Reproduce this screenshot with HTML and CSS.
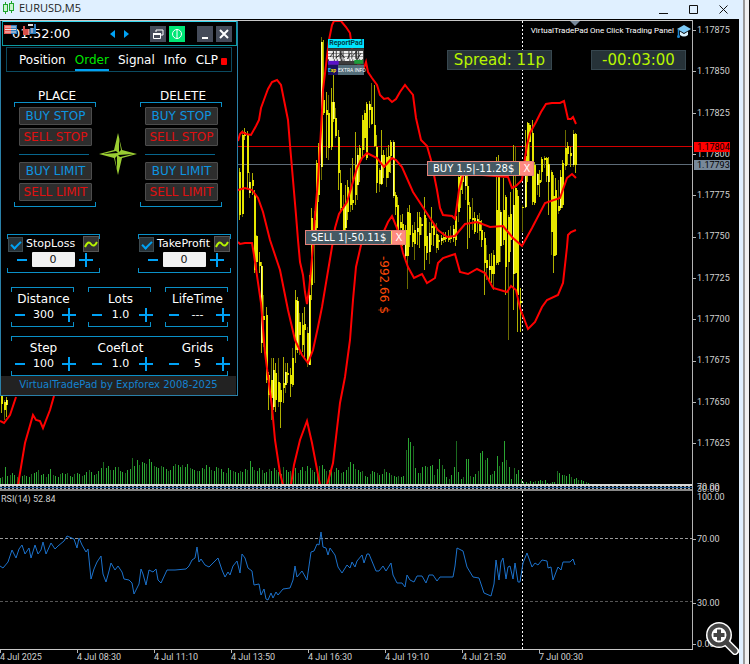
FILE: index.html
```html
<!DOCTYPE html>
<html lang="en">
<head>
  <meta charset="UTF-8" />
  <meta name="viewport" content="width=device-width, initial-scale=1" />
  <title>EURUSD,M5</title>
  <link rel="stylesheet" href="styles.css">
</head>
<body>
  <div class="window">
    <header class="titlebar">
      <svg class="candle-icon" viewBox="0 0 11 14"><path d="M2.5 1v12M8.5 0v12" stroke="#1fa52e"/><rect x=".5" y="3.500" width="4" height="7" fill="#c9f5cf" stroke="#1fa52e"/><rect x="6.500" y="2.500" width="4" height="7" fill="#c9f5cf" stroke="#1fa52e"/></svg>
      <h1>EURUSD,M5</h1>
      <div class="window-buttons">
        <button aria-label="Minimize"><svg viewBox="0 0 9 9"><path d="M0 8.500h9"/></svg></button>
        <button aria-label="Maximize"><svg viewBox="0 0 9 9"><path d="M.5.5h8v8h-8z"/></svg></button>
        <button aria-label="Close"><svg viewBox="0 0 9 9"><path d="M.5.5l8 8M8.500.5l-8 8"/></svg></button>
      </div>
    </header>

    <main class="chart">
      <section class="pane price-pane">
        <div class="plot">
          <svg id="price" viewBox="0 21 692 463" preserveAspectRatio="none"></svg>

          <div class="one-click">
            <span>VirtualTradePad One Click Trading Panel</span>
            <svg viewBox="0 0 14 13"><path d="M0 4l7-4 7 4-7 4z" fill="#7cc8f5"/><path d="M3 6.500v3.500q4 3 8 0V6.500L7 9z" fill="#d7effc"/><path d="M1.500 4.500V11" stroke="#1d86cf" stroke-width="1.500"/><circle cx="1.500" cy="11.500" r="1.500" fill="#1d86cf"/></svg>
          </div>
          <div class="badge spread">Spread: 11p</div>
          <div class="badge timer">-00:03:00</div>
          <div class="deal buy"><span>BUY 1.5|-11.28$</span><button aria-label="Close buy">X</button></div>
          <div class="deal sell"><span>SELL 1|-50.11$</span><button aria-label="Close sell">X</button></div>
          <div class="loss">-992.66 $</div>

          <div class="report">
            <b>ReportPad</b>
            <svg viewBox="0 0 37 17">
              <rect width="37" height="17" fill="#3c3c3c"/>
              <path d="M0 4h36M0 7h36M0 10h36M1 12h34" stroke="#eee" stroke-width="2.500" stroke-dasharray="5 1 2 1 3 2 1 1"/>
              <path d="M2 9l4-5M8 10l5-4M13 5l4 5M20 11l3-6M25 8l5-5M30 11l4-6" stroke="#222"/>
              <rect y="13" width="11" height="4" fill="#5b12c9"/><rect x="27" y="12" width="9" height="4" fill="#1d9b3a"/>
            </svg>
            <div><em>E<i>xp</i></em><span>EXTRA INFO</span></div>
          </div>

          <aside class="panel">
            <div class="panel-head">
              <time>01:52:00</time>
              <svg class="flags" viewBox="0 0 34 12">
                <path d="M0 1h7v9H0z" fill="#e9574f"/><path d="M7 1h6v9H7z" fill="#2d7fc0"/><path d="M1 3h11M1 5.500h11M1 8h11" stroke="#f5dcdc"/>
                <path d="M19 2h2v3h4v6h-6z" fill="#d85049"/><path d="M32 0h-2v4h-4v6h6z" fill="#2d7fc0"/><path d="M24 1h5" stroke="#ddd" stroke-width="2"/><path d="M25 5v6M28 4v5" stroke="#f3c8c8"/>
              </svg>
              <button class="arrow" aria-label="Previous"><svg viewBox="0 0 5 8"><path d="M5 0v8L0 4z"/></svg></button>
              <button class="arrow" aria-label="Next"><svg viewBox="0 0 5 8"><path d="M0 0v8l5-4z"/></svg></button>
              <div class="head-buttons">
                <button aria-label="Restore"><svg viewBox="0 0 16 16"><path d="M6 6V4h7v5h-2M3.500 7.500h7v5h-7z" /><path d="M3 8h8" stroke-width="2"/></svg></button>
                <button class="info" aria-label="About"><svg viewBox="0 0 16 16"><circle cx="8" cy="8" r="4.500"/><path d="M8 3v10"/></svg></button>
                <button class="min" aria-label="Minimize panel"><svg viewBox="0 0 16 16"><path d="M5 12h6" stroke-width="2"/></svg></button>
                <button aria-label="Close panel"><svg viewBox="0 0 16 16"><path d="M4 4l8 8M12 4l-8 8" stroke-width="2"/></svg></button>
              </div>
            </div>

            <nav class="tabs">
              <button>Position</button>
              <button class="active">Order</button>
              <button>Signal</button>
              <button>Info</button>
              <button>CLP</button>
              <i class="dot"></i>
            </nav>

            <div class="orders">
              <section>
                <h2>PLACE</h2>
                <div class="bracket order-box">
                  <button class="up">BUY STOP</button>
                  <button class="down">SELL STOP</button>
                  <hr>
                  <button class="up">BUY LIMIT</button>
                  <button class="down">SELL LIMIT</button>
                </div>
              </section>
              <svg class="star" viewBox="0 0 38 42">
                <path d="M19 0l4 17 15 4-15 4-4 17-4-17-15-4 15-4z" fill="#9acd32"/>
                <path d="M20 5l2 12-2 2zM34 21l-13 3-2-2zM18 37l-2-12 2-2zM4 21l13-3 2 2z" fill="#000"/>
              </svg>
              <section>
                <h2>DELETE</h2>
                <div class="bracket order-box">
                  <button class="up">BUY STOP</button>
                  <button class="down">SELL STOP</button>
                  <hr>
                  <button class="up">BUY LIMIT</button>
                  <button class="down">SELL LIMIT</button>
                </div>
              </section>
            </div>

            <div class="stops">
              <div class="bracket stop">
                <div class="stop-head">
                  <input type="checkbox" id="sl-on" checked>
                  <label for="sl-on">StopLoss</label>
                  <button aria-label="StopLoss line"><svg viewBox="0 0 14 14"><path d="M1 10Q4 3 7 7t6-2"/></svg></button>
                </div>
                <div class="stepper">
                  <button class="minus" aria-label="Less StopLoss"></button>
                  <input type="text" value="0" aria-label="StopLoss value">
                  <button class="plus" aria-label="More StopLoss"></button>
                </div>
              </div>
              <div class="bracket stop">
                <div class="stop-head">
                  <input type="checkbox" id="tp-on" checked>
                  <label for="tp-on">TakeProfit</label>
                  <button aria-label="TakeProfit line"><svg viewBox="0 0 14 14"><path d="M1 10Q4 3 7 7t6-2"/></svg></button>
                </div>
                <div class="stepper">
                  <button class="minus" aria-label="Less TakeProfit"></button>
                  <input type="text" value="0" aria-label="TakeProfit value">
                  <button class="plus" aria-label="More TakeProfit"></button>
                </div>
              </div>
            </div>

            <div class="params">
              <div class="bracket param">
                <label for="distance">Distance</label>
                <div class="stepper"><button class="minus" aria-label="Less distance"></button><input type="text" id="distance" value="300"><button class="plus" aria-label="More distance"></button></div>
              </div>
              <div class="bracket param">
                <label for="lots">Lots</label>
                <div class="stepper"><button class="minus" aria-label="Less lots"></button><input type="text" id="lots" value="1.0"><button class="plus" aria-label="More lots"></button></div>
              </div>
              <div class="bracket param">
                <label for="lifetime">LifeTime</label>
                <div class="stepper"><button class="minus" aria-label="Less lifetime"></button><input type="text" id="lifetime" value="---"><button class="plus" aria-label="More lifetime"></button></div>
              </div>
            </div>

            <div class="params bracket">
              <div class="param">
                <label for="step">Step</label>
                <div class="stepper"><button class="minus" aria-label="Less step"></button><input type="text" id="step" value="100"><button class="plus" aria-label="More step"></button></div>
              </div>
              <div class="param">
                <label for="coef">CoefLot</label>
                <div class="stepper"><button class="minus" aria-label="Less coef"></button><input type="text" id="coef" value="1.0"><button class="plus" aria-label="More coef"></button></div>
              </div>
              <div class="param">
                <label for="grids">Grids</label>
                <div class="stepper"><button class="minus" aria-label="Less grids"></button><input type="text" id="grids" value="5"><button class="plus" aria-label="More grids"></button></div>
              </div>
            </div>

            <footer><a href="#">VirtualTradePad by Expforex 2008-2025</a></footer>
          </aside>
        </div>

        <div class="axis">
          <ul class="prices">
            <li>1.17875</li><li>1.17850</li><li>1.17825</li><li>1.17800</li><li>1.17775</li><li>1.17750</li>
            <li>1.17725</li><li>1.17700</li><li>1.17675</li><li>1.17650</li><li>1.17625</li>
          </ul>
          <span class="tag ask">1.17804</span>
          <span class="tag bid">1.17793</span>
        </div>
      </section>

      <div class="pane splitter">
        <div class="plot"></div>
        <div class="axis"><span class="squeezed">70.00</span><span class="squeezed low">30.00</span></div>
      </div>

      <section class="pane rsi-pane">
        <div class="plot">
          <svg id="rsi" viewBox="0 491 692 158" preserveAspectRatio="none"></svg>
          <span class="rsi-name">RSI(14) 52.84</span>
        </div>
        <ul class="axis rsi-levels">
          <li class="plain">100.00</li><li>70.00</li><li>30.00</li><li>0.00</li>
        </ul>
      </section>

      <ul class="times">
        <li>4 Jul 2025</li><li>4 Jul 08:30</li><li>4 Jul 11:10</li><li>4 Jul 13:50</li><li>4 Jul 16:30</li>
        <li>4 Jul 19:10</li><li>4 Jul 21:50</li><li>7 Jul 00:30</li>
      </ul>

      <button class="magnify" aria-label="Zoom in">
        <svg viewBox="0 0 34 34"><path d="M22 22l8 8" stroke="#fff" stroke-width="8" stroke-linecap="round"/><circle cx="14" cy="14" r="13" fill="#fff"/><path d="M22 22l8 8" stroke="#444" stroke-width="5" stroke-linecap="round"/><circle cx="14" cy="14" r="9.500" fill="#fff" stroke="#444" stroke-width="4"/><path d="M14 8.500v11M8.500 14h11" stroke="#444" stroke-width="4"/></svg>
      </button>
    </main>
  </div>
  <div class="edge"></div>

  <script src="chart.js"></script>
</body>
</html>
```

FILE: styles.css
```css
:root {
  --frame: #e0f0ff;
  --line: #0a90c8;
  --blue: #00a2f5;
  --wide: "DejaVu Sans", Verdana, sans-serif;
  --small: Roboto, "Liberation Sans", sans-serif;
}
* {
  box-sizing: border-box;
}
body {
  margin: 0;
  display: flex;
  min-height: 100vh;
  background: #000;
  color: #fff;
  font-family: var(--wide);
  font-size: 12px;
}
button {
  margin: 0;
  padding: 0;
  border: none;
  background: none;
  color: inherit;
  font: inherit;
  cursor: pointer;
}
button svg {
  display: block;
  fill: none;
}
ul {
  margin: 0;
  padding: 0;
  list-style: none;
}
.window {
  flex: 1;
  min-width: 0;
  display: flex;
  flex-direction: column;
  background: var(--frame);
}
.edge {
  width: 7px;
  background: #f0f0f0;
  border-left: 2px solid #999;
  border-right: 1px solid #111;
}

/* title bar */
.titlebar {
  height: 19px;
  display: flex;
  align-items: center;
  padding: 0 15px 4px 3px;
  color: #222;
}
.candle-icon {
  width: 11px;
  height: 14px;
  margin-right: 5px;
}
.titlebar h1 {
  margin: 0;
  font: 11px "Open Sans", sans-serif;
}
.window-buttons {
  margin-left: auto;
  padding-top: 4px;
  display: flex;
  gap: 21px;
}
.window-buttons svg {
  width: 9px;
  height: 9px;
  stroke: #111;
}

/* chart */
.chart {
  position: relative;
  flex: 1;
  display: flex;
  flex-direction: column;
  margin-right: 4px;
  padding-top: 1px;
  background: #000;
}
.pane {
  display: flex;
}
.plot {
  position: relative;
  flex: 1;
  min-width: 0;
}
.plot > svg {
  position: absolute;
  width: 100%;
  height: 100%;
}
.axis {
  position: relative;
  width: 47px;
  border-left: 1px solid #b4b4b4;
  font: 9px/12px var(--small);
  color: #d0d0d0;
}
.axis li::before {
  content: "";
  display: inline-block;
  width: 3px;
  height: 1px;
  margin-right: 1px;
  background: #b4b4b4;
  vertical-align: middle;
}
.axis li.plain::before {
  background: none;
}
.price-pane {
  flex: 1;
  min-height: 464px;
}
.price-pane > .plot {
  border-top: 1px solid #c8c8c8;
}
.prices {
  height: 100%;
  padding: 4px 0 35px;
  display: flex;
  flex-direction: column;
  justify-content: space-between;
}
.tag {
  position: absolute;
  left: 1px;
  width: 36px;
  height: 10px;
  padding-left: 3px;
  line-height: 10px;
  color: #000;
}
.ask {
  top: 122px;
  background: #f00;
}
.bid {
  top: 140px;
  background: #778899;
}
.splitter {
  height: 7px;
}
.splitter .plot {
  border-top: 2px solid #d8d8d8;
  border-bottom: 2px solid #888;
  background:
    linear-gradient(#16508c, #16508c) 0 1px / 100% 1px no-repeat,
    repeating-linear-gradient(90deg, #aaa 0 2px, #000 2px 4px);
}
.squeezed {
  position: absolute;
  left: 4px;
  top: -3px;
}
.squeezed.low {
  top: -1px;
}
.rsi-pane {
  height: 158px;
}
.rsi-name {
  position: absolute;
  left: 1px;
  top: 2px;
  font: 9px/12px var(--small);
  color: #d0d0d0;
}
.rsi-levels {
  display: grid;
  grid-template-rows: 42px 64px 41px 11px;
}
.times {
  height: 15px;
  margin-right: 46px;
  display: grid;
  grid-template-columns: repeat(9, 1fr);
  border-top: 1px solid #c8c8c8;
  font: 9px/14px var(--small);
  color: #d0d0d0;
}
.times li {
  background: linear-gradient(#b4b4b4, #b4b4b4) 0 0 / 1px 3px no-repeat;
}
.magnify {
  position: absolute;
  right: 0;
  bottom: 9px;
}
.magnify svg {
  width: 34px;
  height: 34px;
}

/* things lying over the chart */
.one-click {
  position: absolute;
  right: 1px;
  top: 3px;
  display: flex;
  align-items: center;
  gap: 3px;
  font: 8px/14px var(--small);
}
.one-click svg {
  width: 14px;
  height: 13px;
}
.badge {
  position: absolute;
  top: 29px;
  height: 20px;
  line-height: 19px;
  text-align: center;
  font-size: 15px;
  color: #b8f500;
  background: #263238;
  border: 1px solid #37474f;
}
.spread {
  left: 447px;
  width: 105px;
}
.timer {
  left: 591px;
  width: 95px;
}
.deal {
  position: absolute;
  display: flex;
  height: 15px;
  font-size: 10px;
  line-height: 13px;
  border: 1px solid #e58078;
  background: #455a64;
}
.deal span {
  padding: 0 5px;
}
.deal button {
  width: 14px;
  background: #ff8a80;
  border-left: 1px solid #ffe060;
}
.buy {
  left: 427px;
  top: 140px;
}
.sell {
  left: 305px;
  top: 209px;
}
.loss {
  position: absolute;
  left: 377px;
  top: 235px;
  writing-mode: vertical-rl;
  line-height: 14px;
  color: #ff4a08;
}
.report {
  position: absolute;
  left: 328px;
  top: 18px;
  width: 36px;
  display: flex;
  flex-direction: column;
}
.report b {
  background: #00e5ff;
  color: #003a44;
  font: bold 7px/9px var(--small);
  text-align: center;
}
.report > svg {
  width: 100%;
  height: 17px;
}
.report div {
  display: flex;
  height: 10px;
  font: 5px/10px var(--small);
  white-space: nowrap;
  background: #546e7a;
}
.report em {
  flex: none;
  width: 10px;
  background: #1a1060;
  color: #20d0ff;
  font: bold 5px/10px var(--small);
}
.report em i {
  color: #ffe000;
  font-style: normal;
}

/* trade panel */
.panel {
  position: absolute;
  left: 0;
  top: 0;
  width: 238px;
  background: #000;
  border: 1px solid #2a80a8;
  border-top: none;
}
.panel-head {
  position: relative;
  height: 25px;
  margin-left: 1px;
  padding: 0 4px 0 9px;
  display: flex;
  align-items: center;
  border: 1px solid #0b9aa0;
  border-top-color: #35d8f0;
}
.flags {
  position: absolute;
  left: 1px;
  top: 2px;
  width: 34px;
  height: 12px;
}
.panel-head time {
  font-size: 13px;
  margin-right: 40px;
}
.arrow {
  margin-right: 9px;
}
.arrow svg {
  width: 5px;
  height: 8px;
  fill: var(--blue);
}
.head-buttons {
  margin-left: auto;
  display: flex;
  gap: 3px;
}
.head-buttons button {
  background: #454b59;
}
.head-buttons .info {
  background: #00e676;
}
.head-buttons .min {
  margin-left: 9px;
}
.head-buttons svg {
  width: 16px;
  height: 16px;
  stroke: #fff;
}
.tabs {
  height: 25px;
  margin: 1px 5px 0;
  padding: 3px 4px 0 12px;
  display: flex;
  justify-content: space-between;
  border: 1px solid #0b4a60;
}
.tabs button {
  height: 20px;
  border-bottom: 2px solid transparent;
}
.tabs .active {
  color: #00e600;
  border-bottom-color: var(--blue);
}
.dot {
  width: 6px;
  height: 7px;
  margin: 7px 0 0 -6px;
  border-radius: 1px;
  background: #f00;
}
.orders {
  display: flex;
  align-items: center;
  justify-content: space-between;
  margin: 18px 15px 0 13px;
}
.orders h2 {
  margin: 0;
  padding-left: 4px;
  font: 12px/12px var(--wide);
  text-align: center;
}
.star {
  width: 38px;
  height: 42px;
  margin-top: 10px;
}
.bracket {
  position: relative;
}
.bracket::before, .bracket::after {
  content: "";
  position: absolute;
  left: 0;
  right: 0;
  height: 4px;
  border: 1px solid var(--line);
  pointer-events: none;
}
.bracket::before {
  top: 0;
  border-bottom: none;
}
.bracket::after {
  bottom: 0;
  border-top: none;
}
.order-box {
  width: 82px;
  height: 105px;
  padding: 5px 4px 6px 5px;
  display: flex;
  flex-direction: column;
  justify-content: space-between;
}
.order-box button {
  height: 18px;
  line-height: 16px;
  white-space: nowrap;
  background: #2d2d2d;
  border: 1px solid #4c4c4c;
  border-radius: 1px;
}
.order-box hr {
  width: 70px;
  margin: 4px 0;
  border: none;
  border-top: 1px solid #07658c;
}
.order-box .up {
  color: #0d95e0;
}
.order-box .down {
  color: #e01010;
}
.stops {
  display: flex;
  justify-content: space-between;
  margin: 27px 6px 0;
}
.stop {
  width: 93px;
  height: 39px;
  padding: 2px 1px;
}
.stop-head {
  display: flex;
  align-items: center;
  font-size: 11px;
  line-height: 16px;
}
.stop-head label {
  flex: 1;
  width: 0;
  padding-left: 3px;
}
.stop-head input {
  appearance: none;
  width: 15px;
  height: 15px;
  margin: 0;
  background: #263238;
  border: 1px solid #3c4a50;
}
.stop-head input:checked::after {
  content: "";
  display: block;
  width: 8px;
  height: 4px;
  margin: 3px 2px;
  border: solid var(--blue);
  border-width: 0 0 2px 2px;
  transform: rotate(-45deg);
}
.stop-head button {
  position: relative;
  background: #333;
  border: 1px solid #555;
}
.stop-head svg {
  width: 14px;
  height: 14px;
  stroke: #b8f500;
  stroke-width: 2;
}
.stepper {
  display: flex;
  align-items: center;
  justify-content: space-between;
}
.stepper input {
  min-width: 0;
  width: 34px;
  height: 15px;
  padding: 0;
  border: none;
  background: none;
  color: #fff;
  font: 11px/15px var(--wide);
  text-align: center;
}
.minus {
  width: 10px;
  height: 14px;
  background: linear-gradient(var(--blue), var(--blue)) center / 10px 2px no-repeat;
}
.plus {
  width: 14px;
  height: 14px;
  background: linear-gradient(var(--blue), var(--blue)) center / 14px 2px no-repeat,
    linear-gradient(var(--blue), var(--blue)) center / 2px 14px no-repeat;
}
.stop .stepper {
  padding: 0 6px 0 9px;
}
.stop .stepper input {
  width: 43px;
  background: #f2f2f2;
  color: #111;
  border-radius: 1px;
}
.params {
  display: grid;
  grid-template-columns: repeat(3, 63px);
  gap: 14px;
  width: 217px;
  margin: 14px 0 0 10px;
}
.params + .params {
  margin-top: 9px;
}
.param {
  height: 40px;
  padding: 5px 0 0 4px;
}
.param label {
  display: block;
  padding-right: 2px;
  line-height: 15px;
  text-align: center;
}
.param .stepper {
  margin-right: -2px;
}
.panel footer {
  height: 19px;
  margin-right: 1px;
  line-height: 18px;
  text-align: center;
  font-size: 10px;
  background: #222;
}
.panel footer a {
  color: #1482d0;
  text-decoration: none;
}
```

FILE: chart.js
```js
// x, high, low, body top, body bottom
const candles = [
  [1,390,413,395,404],[4,400,420,402,410],[6,397,417,400,405],
  [239,168,220,172,215],[242,130,217,135,214],[244,128,140,132,136],[247,131,188,135,173],[249,172,198,182,193],
  [252,173,195,180,186],[254,190,273,195,270],[256,235,268,236,262],[259,252,273,262,266],[261,262,353,266,343],
  [263,295,347,316,320],[266,307,383,315,380],[268,372,410,375,395],[271,358,420,380,398],[273,358,410,370,407],
  [275,363,412,373,400],[278,358,407,382,402],[280,383,428,390,402],[283,357,403,383,388],[285,363,393,372,385],
  [287,363,383,373,375],[290,368,397,375,384],[292,348,387,358,385],[295,290,363,300,350],[297,297,353,301,350],
  [299,313,355,322,335],[302,313,352,325,345],[304,307,357,324,330],[307,327,367,333,364],[309,275,365,295,365],
  [311,208,300,218,285],[314,211,283,220,240],[316,160,240,163,228],[318,143,202,147,195],[321,37,180,42,167],
  [323,40,115,100,113],[326,92,158,110,115],[328,95,160,113,148],[331,88,150,102,147],[333,75,122,102,119],
  [335,108,138,118,136],[338,130,190,137,173],[340,170,213,183,208],[343,195,240,207,235],[345,185,232,203,228],
  [347,180,220,187,212],[350,168,212,188,205],[352,158,210,200,203],[355,132,205,165,195],[357,148,200,155,185],
  [359,145,182,148,160],[362,115,158,120,150],[364,110,150,113,138],[366,102,160,104,158],[369,101,128,104,110],
  [371,83,125,107,124],[374,85,147,125,146],[376,135,193,147,183],[379,168,192,170,184],[381,130,185,155,184],
  [383,150,178,155,168],[386,148,187,157,178],[388,145,178,156,172],[390,140,173,142,156],[393,140,198,142,196],
  [395,192,215,195,207],[397,197,240,205,230],[400,215,235,222,228],[402,214,246,224,243],[405,225,262,230,256],
  [407,208,289,212,256],[409,205,247,213,235],[412,225,247,233,242],[414,222,260,230,244],[417,212,245,228,232],
  [419,212,248,217,235],[421,218,235,224,226],[424,197,270,215,246],[426,218,260,236,253],[429,222,264,233,252],
  [431,207,245,226,228],[433,222,246,226,235],[436,223,253,234,248],[438,235,250,240,242],[441,235,245,238,241],
  [443,232,243,237,240],[445,232,242,237,239],[448,230,242,236,240],[450,226,243,236,239],[453,225,242,229,238],
  [455,212,246,216,240],[458,172,222,177,212],[460,170,208,175,190],[462,172,194,176,182],[465,172,200,176,186],
  [467,175,249,186,205],[469,202,238,207,219],[472,198,230,218,220],[474,212,234,218,232],[477,215,233,219,222],
  [479,213,240,221,231],[481,220,247,230,240],[484,232,295,238,263],[486,245,280,260,268],[489,254,280,266,270],
  [491,253,283,266,274],[493,250,290,255,274],[496,157,265,210,263],[498,155,265,170,262],[500,210,262,212,246],
  [503,178,245,210,240],[505,195,295,197,267],[508,215,340,217,262],[510,192,252,214,240],[513,145,310,205,274],
  [515,146,274,188,273],[517,190,332,196,295],[520,288,332,301,303],[522,205,232,207,208],[525,130,208,156,207],
  [527,122,182,123,162],[529,123,162,125,142],[532,120,205,133,202],[534,162,205,165,203],[537,173,195,174,185],
  [539,170,197,180,183],[541,157,182,159,172],[544,156,168,158,160],[546,157,182,158,176],[548,157,215,164,182],
  [551,170,255,172,232],[553,175,273,196,256],[555,178,256,190,255],[558,180,214,206,211],[560,170,210,177,208],
  [562,160,208,163,205],[565,130,170,148,166],[567,142,165,146,154],[570,147,167,153,156],[573,130,167,134,165],
  [575,133,173,134,165]
];

const bands = [
  "238,141 240,134 242,132 246,134 251,135 256,126 259,120 261,108 265,97 268,89 272,82 277,80 281,85 284,100 288,120 290,145 293,180 296,215 298,240 300,262 303,275 305,292 307,304 309,290 311,270 313,245 315,215 318,180 321,130 323,90 326,65 329,40 332,25 334,21 341,21 346,27 350,33 352,48 358,64 364,68 366,62 368,72 372,78 377,85 380,95 384,99 388,98 392,102 396,99 400,92 405,85 409,90 413,95 416,118 421,140 427,146 431,160 434,175 437,190 440,208 443,215 452,216 455,219 457,205 459,190 463,175 475,175 482,175 508,177 512,188 516,186 522,180 524,165 527,145 530,133 536,122 541,112 546,104 552,103 560,103 564,101 568,119 571,119 573,117 576,124",
  "238,190 245,188 252,190 258,198 263,212 270,240 280,270 288,310 295,340 302,355 308,363 313,350 318,327 322,307 332,247 335,228 339,214 347,202 357,168 362,158 367,153 377,158 384,167 392,158 396,160 402,167 413,192 428,215 438,230 447,237 455,236 465,224 477,222 490,227 503,226 513,238 522,246 532,228 545,203 560,198 567,178 572,174 576,178",
  "238,242 240,244 245,243 252,243 254,255 261,303 265,353 272,407 275,440 280,473 283,485",
  "291,485 294,465 300,440 307,421 312,443 320,485",
  "327,485 333,463 340,403 345,377 350,340 353,300 356,267 361,245 363,240 380,240 388,222 392,216 397,228 403,253 408,267 414,278 422,274 427,283 435,278 438,263 443,258 455,254 460,272 468,274 477,269 485,273 493,288 507,292 511,286 516,290 520,308 528,329 535,322 542,307 547,300 558,295 563,283 567,247 568,235 571,232 576,230",
  "0,421 4,423 10,415 16,397",
  "18,485 25,443 33,415 36,420 40,421 43,428 50,410 54,396"
];

// tick volume, one bar every 2.4px
const volumes = [
  6,7,17,8,9,11,9,7,6,8,9,8,7,10,11,12,14,9,10,7,10,15,9,8,7,10,11,10,11,8,7,
  10,11,10,8,9,12,14,12,9,10,13,16,22,16,18,14,14,17,17,13,12,11,14,15,26,18,24,19,22,
  21,20,25,22,18,17,16,18,17,15,13,14,18,20,19,17,19,17,20,16,15,14,13,13,16,15,19,17,14,13,
  17,16,15,12,11,16,14,13,12,11,13,12,15,14,23,17,14,13,16,14,11,12,15,13,16,14,12,10,17,14,12,
  13,12,16,11,14,17,13,18,16,14,12,15,18,19,15,13,14,16,12,16,14,11,12,14,17,22,20,15,14,12,13,
  8,7,10,13,12,11,9,10,15,12,11,9,8,7,8,7,8,34,46,42,38,16,11,11,17,18,17,18,
  19,9,15,25,19,15,7,5,9,17,43,12,5,7,25,25,8,7,10,13,31,33,24,26,9,10,13,28,18,22,43,24,
  17,5,16,10,14,5,2,2,1,3,2,3,3,4,3,4,1,1,2,2,13,11,9,9,8,10,7,5,6,4,4,3,2,1
];

const rsi = "0,566 3,568 8,562 12,550 16,558 19,549 22,545 25,554 29,548 31,558 35,545 38,554 41,550 43,542 46,554 51,543 55,549 58,546 64,541 67,536 74,539 77,548 79,538 82,545 86,552 88,549 91,579 94,569 97,562 101,556 103,574 106,582 109,571 111,563 115,570 118,566 122,572 124,579 129,580 132,583 134,594 139,584 141,569 143,574 146,585 149,570 153,572 156,569 158,580 161,583 167,570 175,570 186,569 189,566 192,560 195,558 197,547 199,562 201,559 205,565 209,567 214,562 218,558 222,570 225,577 228,572 230,575 233,566 237,561 240,573 242,554 245,558 248,568 252,571 254,585 259,584 261,595 264,589 266,599 268,600 271,593 273,598 276,592 278,595 283,589 290,588 293,580 295,566 297,577 302,571 307,580 311,552 314,551 317,544 319,545 321,532 323,547 326,548 328,555 330,548 335,555 338,567 342,573 347,565 350,568 352,562 355,567 357,561 362,555 364,563 367,554 369,554 376,571 379,571 383,566 386,571 391,563 393,575 397,583 402,583 405,587 407,575 410,580 414,582 417,576 422,576 426,583 429,575 433,575 437,581 440,577 453,577 455,566 457,548 463,551 467,567 473,577 479,578 484,593 491,596 494,584 496,560 499,580 501,562 503,558 506,579 508,567 510,566 513,579 515,563 518,582 520,582 523,563 527,553 532,567 535,563 538,565 542,560 547,561 548,568 551,567 553,580 558,567 561,570 563,562 570,562 573,559 575,565";

function line(points, color, width) {
  return `<polyline points="${points}" fill="none" stroke="${color}" stroke-width="${width}"/>`;
}

function drawPrice() {
  let out = "";
  volumes.forEach((v, i) => {
    const x = Math.round(i * 2.4);
    out += `<rect x="${x}" y="${484 - v}" width="1" height="${v}" fill="${i % 3 === 1 ? "#1b6a1f" : "#2aa532"}"/>`;
  });
  out += '<path d="M0 146.500h692" stroke="#d40000"/><path d="M0 164.500h692" stroke="#5d6b78"/>';
  out += '<path d="M522.500 21v463" stroke="#fff" stroke-dasharray="2 2"/>';
  candles.forEach(([x, high, low, top, bottom], i) => {
    out += `<rect x="${x}" y="${high}" width="1" height="${low - high}" fill="${i % 3 === 1 ? "#6b6b00" : "#b0b000"}"/>`;
    out += `<rect x="${x}" y="${top}" width="2" height="${bottom - top}" fill="#e6e600"/>`;
    if (i % 5 === 2) {
      out += `<rect x="${x}" y="${top}" width="1" height="${bottom - top}" fill="#ffff90"/>`;
    }
  });
  bands.forEach(points => out += line(points, "#f00", 2));
  out += '<path d="M570 21h10l-5 5z" fill="#778899"/>';
  document.getElementById("price").innerHTML = out;
}

function drawRsi() {
  let out = '<path d="M0 538.500h692" stroke="#999" stroke-dasharray="3 2"/>';
  out += '<path d="M0 601.500h692" stroke="#555" stroke-dasharray="3 2"/>';
  out += '<path d="M522.500 491v158" stroke="#fff" stroke-dasharray="2 2"/>';
  out += line(rsi, "#1c72cc", 1);
  document.getElementById("rsi").innerHTML = out;
}

drawPrice();
drawRsi();
```
